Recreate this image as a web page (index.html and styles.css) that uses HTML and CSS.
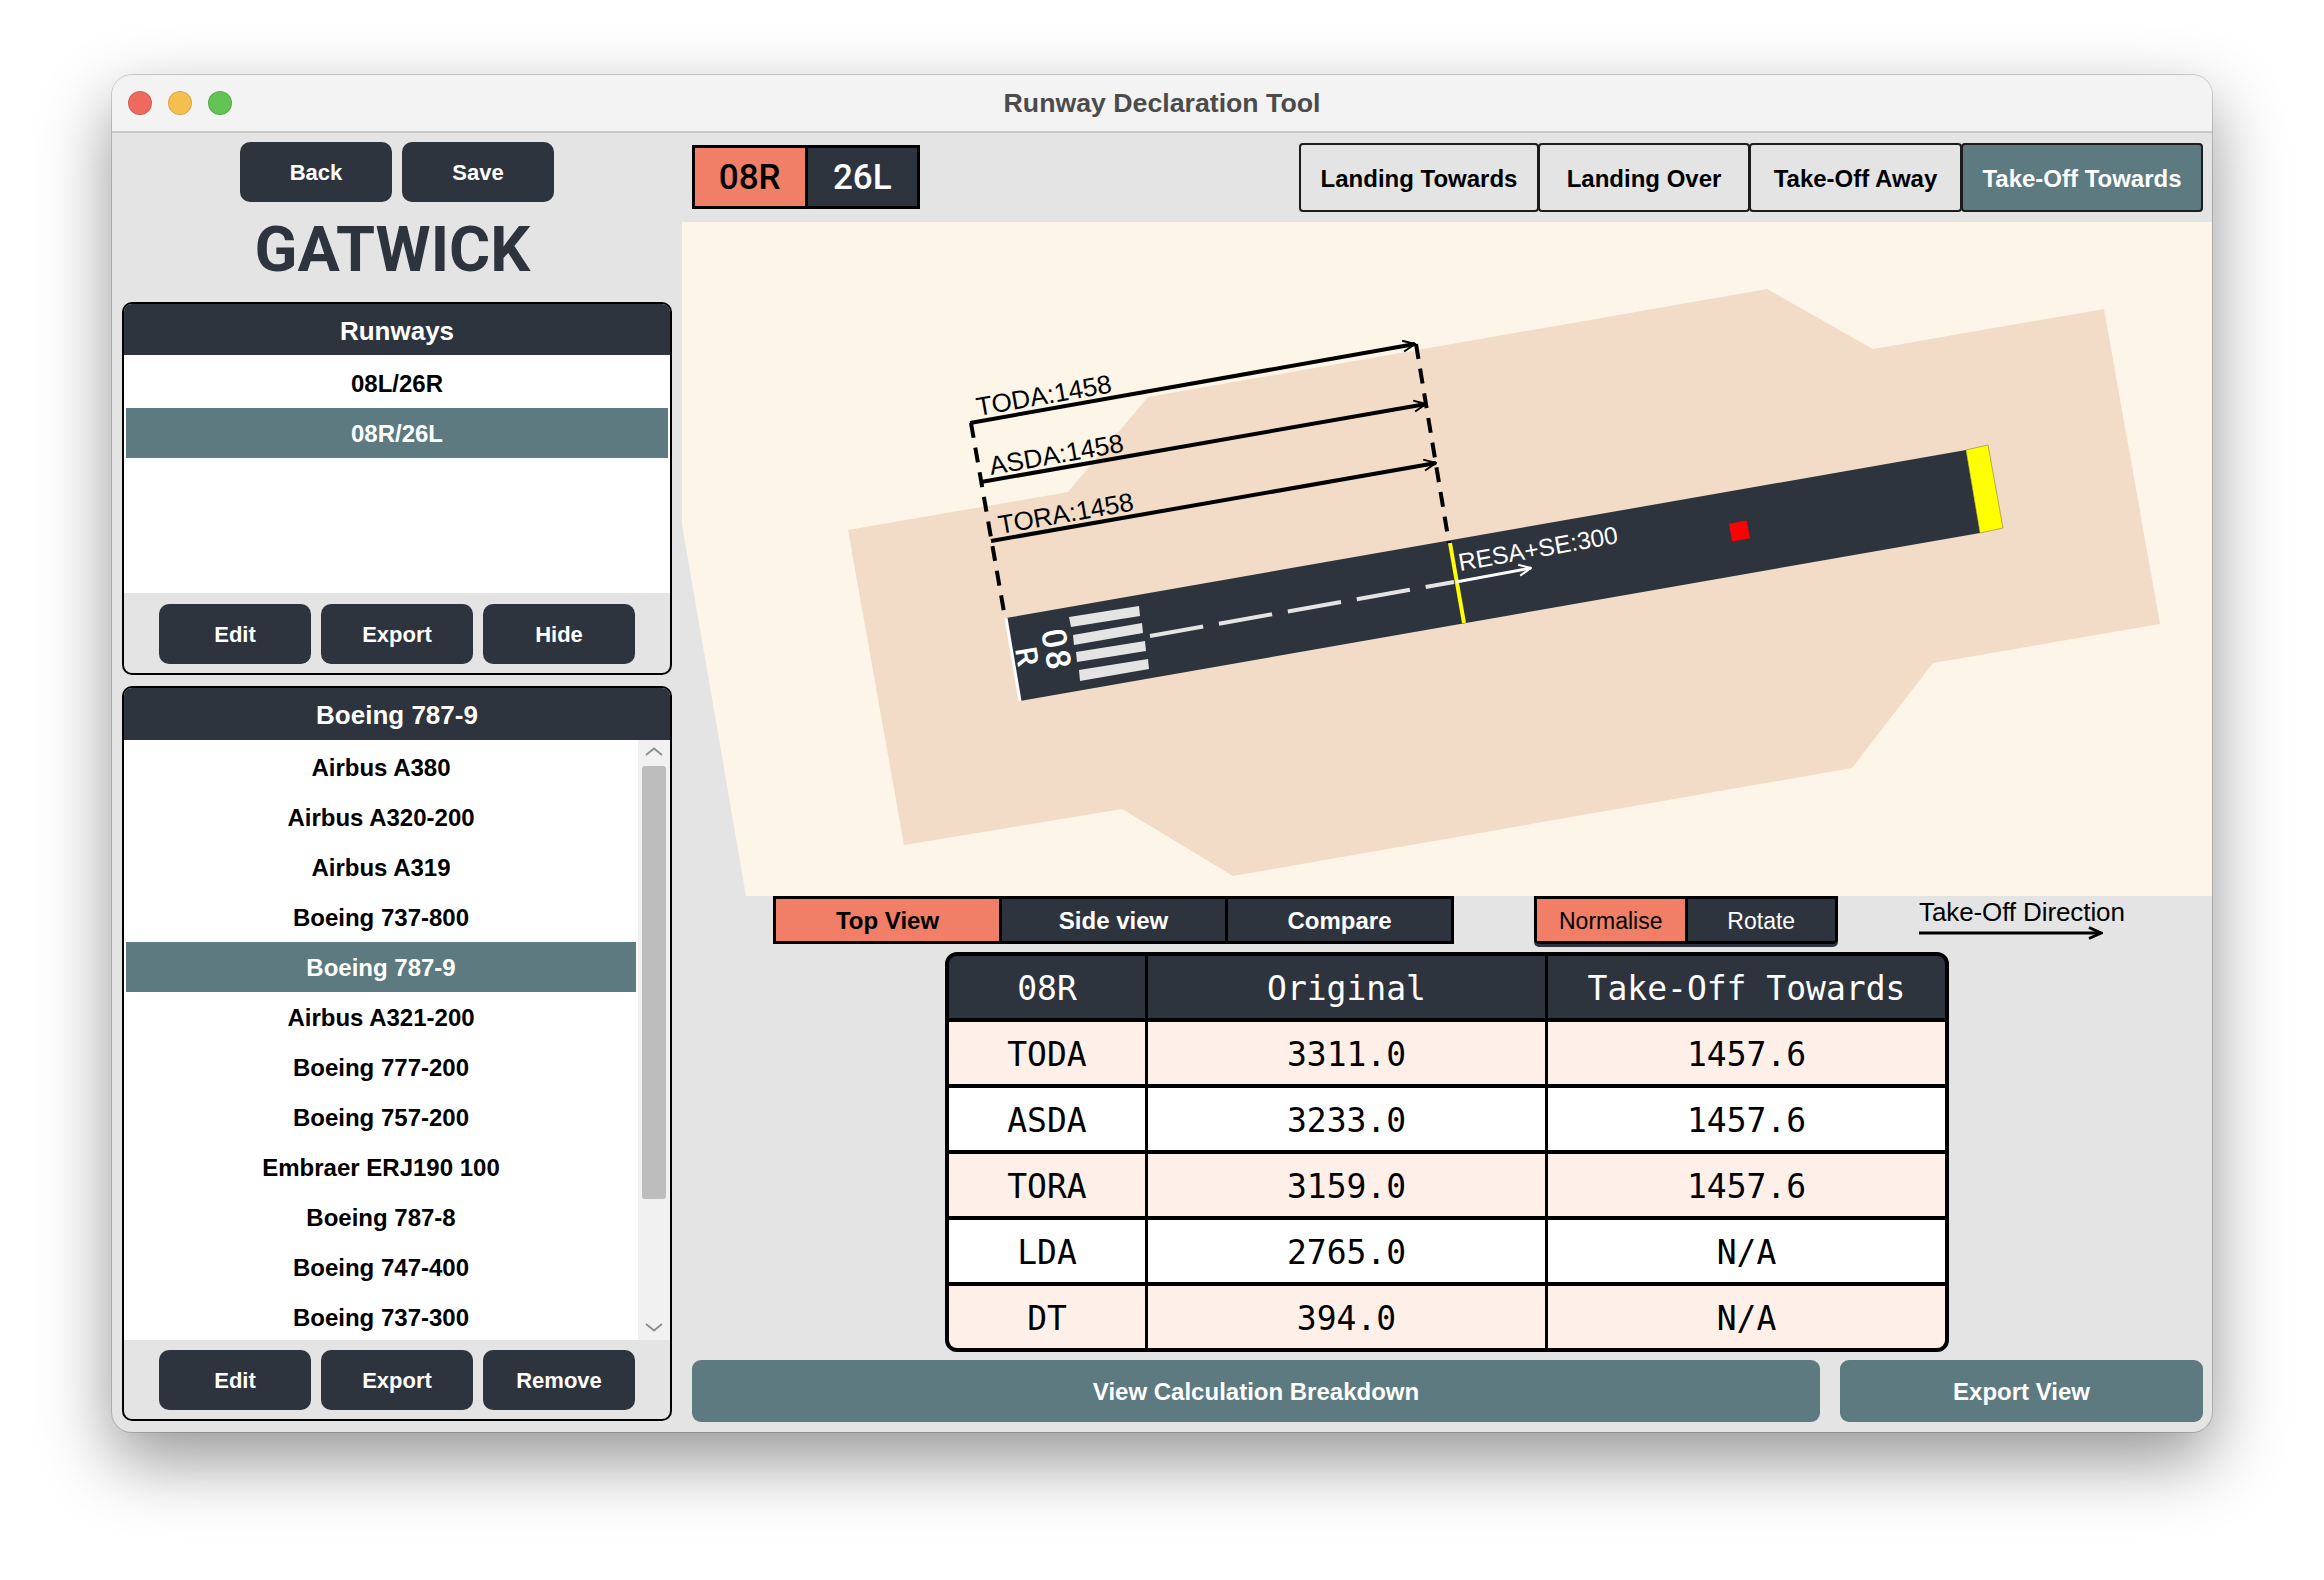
FILE: index.html
```html
<!DOCTYPE html>
<html lang="en">
<head>
<meta charset="utf-8">
<title>Runway Declaration Tool</title>
<link rel="stylesheet" href="styles.css">
</head>
<body>
<div class="window">
  <header class="titlebar">
    <div class="lights"><span class="light red"></span><span class="light yellow"></span><span class="light green"></span></div>
    <div class="title">Runway Declaration Tool</div>
  </header>
  <div class="content">
    <aside class="sidebar">
      <div class="top-buttons"><button class="btn">Back</button><button class="btn">Save</button></div>
      <h1 class="airport">GATWICK</h1>
      <section class="panel runways">
        <div class="panel-head">Runways</div>
        <div class="list">
          <div class="row">08L/26R</div>
          <div class="row selected">08R/26L</div>
        </div>
        <div class="panel-foot"><button class="btn">Edit</button><button class="btn">Export</button><button class="btn">Hide</button></div>
      </section>
      <section class="panel aircraft">
        <div class="panel-head">Boeing 787-9</div>
        <div class="scroll-list">
          <div class="list">
            <div class="row">Airbus A380</div>
            <div class="row">Airbus A320-200</div>
            <div class="row">Airbus A319</div>
            <div class="row">Boeing 737-800</div>
            <div class="row selected">Boeing 787-9</div>
            <div class="row">Airbus A321-200</div>
            <div class="row">Boeing 777-200</div>
            <div class="row">Boeing 757-200</div>
            <div class="row">Embraer ERJ190 100</div>
            <div class="row">Boeing 787-8</div>
            <div class="row">Boeing 747-400</div>
            <div class="row">Boeing 737-300</div>
          </div>
          <div class="scrollbar">
            <svg class="chev" viewBox="0 0 18 9"><path d="M1 8 9 1.5 17 8"/></svg>
            <div class="thumb"></div>
            <svg class="chev chev-down" viewBox="0 0 18 9"><path d="M1 1 9 7.5 17 1"/></svg>
          </div>
        </div>
        <div class="panel-foot"><button class="btn">Edit</button><button class="btn">Export</button><button class="btn">Remove</button></div>
      </section>
    </aside>
    <main class="main">
      <div class="top-row">
        <div class="side-toggle"><span class="side on">08R</span><span class="side off">26L</span></div>
        <div class="tabs">
          <button class="tab">Landing Towards</button>
          <button class="tab">Landing Over</button>
          <button class="tab">Take-Off Away</button>
          <button class="tab active">Take-Off Towards</button>
        </div>
      </div>
      <svg class="canvas" viewBox="682 222 1530 674" width="1530" height="674">
        <defs>
          <marker id="ah" viewBox="0 0 14 14" refX="13" refY="7" markerWidth="14" markerHeight="14" markerUnits="userSpaceOnUse" orient="auto"><path d="M1 1.5 13 7 1 12.5" fill="none" stroke="#000" stroke-width="2"/></marker>
          <marker id="aw" viewBox="0 0 14 14" refX="13" refY="7" markerWidth="14" markerHeight="14" markerUnits="userSpaceOnUse" orient="auto"><path d="M1 1.5 13 7 1 12.5" fill="none" stroke="#fff" stroke-width="2"/></marker>
        </defs>
        <polygon class="cream" points="682,222 2212,222 2212,896 746,896 682,524"/>
        <polygon class="sand" points="848,530 1068,492 1148,397 1767,289 1873,349 2104,309 2160,624 1933,663 1852,768 1233,876 1122,809 904,845"/>
        <polygon class="tarmac" points="1006,618 1966,450 1980,533 1020,701"/>
        <polygon class="stopway" points="1966,450 1988,445 2003,528 1980,533"/>
        <line class="threshold" x1="1006" y1="618" x2="1020" y2="701"/>
        <g class="keys">
          <polygon points="1069,617 1139,606 1140,616 1071,627"/>
          <polygon points="1073,635 1142,623 1143,633 1074,645"/>
          <polygon points="1076,652 1145,641 1146,651 1077,662"/>
          <polygon points="1079,670 1148,659 1149,669 1080,681"/>
        </g>
        <line class="centre" x1="1150" y1="636" x2="1454" y2="582"/>
        <text class="rw-num" transform="translate(1041 631) rotate(80)">08</text>
        <text class="rw-letter" transform="translate(1015 649) rotate(80)">R</text>
        <line class="disp" x1="1450" y1="543" x2="1464" y2="623"/>
        <rect class="marker-red" x="1730.5" y="522" width="18" height="18" transform="rotate(-10 1739.5 531)"/>
        <line class="dash" x1="971" y1="423" x2="1004" y2="612"/>
        <line class="dash" x1="1416" y1="344" x2="1449" y2="543"/>
        <line class="dim" x1="970" y1="423" x2="1415" y2="344" marker-end="url(#ah)"/>
        <line class="dim" x1="981" y1="482" x2="1426" y2="404" marker-end="url(#ah)"/>
        <line class="dim" x1="991" y1="541" x2="1436" y2="463" marker-end="url(#ah)"/>
        <line class="dim-w" x1="1456" y1="582" x2="1531" y2="568" marker-end="url(#aw)"/>
        <text class="lbl" transform="translate(978 416) rotate(-10)">TODA:1458</text>
        <text class="lbl" transform="translate(991 475) rotate(-10)">ASDA:1458</text>
        <text class="lbl" transform="translate(1000 534) rotate(-10)">TORA:1458</text>
        <text class="lbl-w" transform="translate(1460 571) rotate(-10)">RESA+SE:300</text>
      </svg>
      <div class="controls">
        <div class="seg view-seg"><span class="seg-item on">Top View</span><span class="seg-item off">Side view</span><span class="seg-item off">Compare</span></div>
        <div class="seg mode-seg"><span class="seg-item on">Normalise</span><span class="seg-item off">Rotate</span></div>
        <div class="direction">
          <div class="direction-label">Take-Off Direction</div>
          <svg class="direction-arrow" viewBox="0 0 184 14" width="184" height="14">
            <line x1="0" y1="7" x2="182" y2="7"/><path d="M170 1.5 182 7 170 12.5"/>
          </svg>
        </div>
      </div>
      <div class="table">
        <div class="cell head">08R</div><div class="cell head">Original</div><div class="cell head">Take-Off Towards</div>
        <div class="cell tint">TODA</div><div class="cell tint">3311.0</div><div class="cell tint">1457.6</div>
        <div class="cell">ASDA</div><div class="cell">3233.0</div><div class="cell">1457.6</div>
        <div class="cell tint">TORA</div><div class="cell tint">3159.0</div><div class="cell tint">1457.6</div>
        <div class="cell">LDA</div><div class="cell">2765.0</div><div class="cell">N/A</div>
        <div class="cell tint">DT</div><div class="cell tint">394.0</div><div class="cell tint">N/A</div>
      </div>
      <div class="actions">
        <button class="action wide">View Calculation Breakdown</button>
        <button class="action narrow">Export View</button>
      </div>
    </main>
  </div>
</div>
</body>
</html>
```
FILE: styles.css
```css
* { box-sizing: border-box; }
html, body { margin: 0; background: #fff; }
body { width: 2324px; height: 1580px; padding: 75px 112px 0; overflow: hidden; font-family: "Liberation Sans", Arial, sans-serif; }
button { font-family: inherit; border: 0; margin: 0; padding: 0; }

.window { width: 2100px; height: 1357px; background: #e4e4e4; border-radius: 20px; overflow: hidden; box-shadow: 0 28px 70px rgba(0,0,0,.42), 0 0 0 1px rgba(0,0,0,.16); }

.titlebar { height: 58px; background: #f3f3f3; border-bottom: 2px solid #c9c9c9; display: flex; align-items: center; position: relative; }
.lights { display: flex; gap: 16px; padding-left: 16px; }
.light { width: 24px; height: 24px; border-radius: 50%; border: 1px solid rgba(0,0,0,.12); }
.red { background: #ee6a5f; }
.yellow { background: #f5bf4f; }
.green { background: #61c454; }
.title { position: absolute; left: 0; right: 0; top: 13px; text-align: center; font-size: 26.7px; font-weight: 700; color: #4b4b4b; line-height: 30px; }

.content { display: flex; height: 1299px; }
.sidebar { width: 570px; flex: none; padding: 9px 10px 0 10px; }
.top-buttons { display: flex; justify-content: center; gap: 10px; }
.btn { width: 152px; height: 60px; padding-top: 2px; background: #2e343d; color: #fff; border-radius: 10px; font-size: 22px; font-weight: 700; }
.airport { margin: 20px 0 24px; padding-right: 9px; height: 56px; line-height: 56px; text-align: center; font-family: Roboto, sans-serif; font-size: 63px; font-weight: 700; color: #2e343d; }

.panel { width: 550px; border: 2px solid #000; border-radius: 10px; overflow: hidden; background: #e4e4e4; }
.panel-head { background: #2e343d; color: #fff; text-align: center; font-weight: 700; font-size: 26px; height: 51px; line-height: 54px; }
.aircraft .panel-head { height: 52px; line-height: 54px; }
.list { background: #fff; padding: 2px 2px 0; overflow: hidden; }
.row { height: 50px; line-height: 52px; text-align: center; font-size: 24px; font-weight: 700; color: #000; }
.row.selected { background: #5c7a80; color: #fff; }
.runways { height: 373px; }
.runways .list { height: 238px; padding-top: 3px; }
.panel-foot { display: flex; justify-content: center; gap: 10px; padding-top: 11px; }
.aircraft { height: 735px; margin-top: 11px; }
.aircraft .panel-foot { padding-top: 10px; }
.scroll-list { display: flex; height: 600px; }
.scroll-list .list { flex: 1; height: 600px; }
.scrollbar { width: 32px; flex: none; background: #f1f1f1; display: flex; flex-direction: column; align-items: center; padding: 7px 0; }
.chev { width: 18px; height: 9px; flex: none; }
.chev path { fill: none; stroke: #8d8d8d; stroke-width: 1.8; }
.chev-down { margin-top: auto; margin-bottom: 1px; }
.thumb { width: 24px; height: 433px; margin-top: 10px; background: #bdbdbd; border-radius: 3px; }

.main { flex: 1; min-width: 0; }
.top-row { display: flex; justify-content: space-between; align-items: flex-start; padding: 10px 9px 0 10px; height: 89px; }
.side-toggle { display: flex; width: 228px; height: 64px; margin-top: 2px; border: 3px solid #000; background: #000; gap: 3px; }
.side { flex: 1; display: flex; align-items: center; justify-content: center; font-family: Roboto, sans-serif; font-weight: 500; font-size: 35px; }
.side.on { background: #f17e66; color: #000; }
.side.off { background: #2e343d; color: #fff; }
.tabs { display: flex; }
.tab { height: 69px; padding-top: 3px; background: #e4e4e4; border: 2px solid #1c1c1c; border-radius: 4px; font-size: 24px; font-weight: 700; color: #000; margin-left: -1px; flex: none; }
.tab:nth-child(1) { width: 240px; }
.tab:nth-child(2) { width: 212px; }
.tab:nth-child(3) { width: 213px; }
.tab:nth-child(4) { width: 242px; }
.tab.active { background: #5c7a80; color: #fff; }

.canvas { display: block; width: 1530px; height: 674px; }
.cream { fill: #fdf6e8; }
.sand { fill: #f2dcc8; }
.tarmac { fill: #2e343d; }
.stopway { fill: #ffff00; stroke: #6b6b3a; stroke-width: .5; }
.threshold { stroke: #fff; stroke-width: 3; }
.keys polygon { fill: #e4e4e4; }
.centre { stroke: #e4e4e4; stroke-width: 4; stroke-dasharray: 54 16; }
.disp { stroke: #ffff00; stroke-width: 4; }
.marker-red { fill: #ff0000; }
.dash { stroke: #000; stroke-width: 4; stroke-dasharray: 15 10; }
.dim { stroke: #000; stroke-width: 4; fill: none; }
.dim-w { stroke: #fff; stroke-width: 3; }
.lbl { font-family: "Liberation Sans", sans-serif; font-size: 26px; fill: #000; }
.lbl-w { font-family: "Liberation Sans", sans-serif; font-size: 24.5px; fill: #fff; }
.rw-num { font-family: Roboto, sans-serif; font-weight: 500; font-size: 34px; letter-spacing: 2px; fill: #fff; }
.rw-letter { font-family: Roboto, sans-serif; font-weight: 500; font-size: 30px; fill: #fff; }

.controls { display: flex; align-items: flex-start; height: 56px; padding-left: 91px; }
.seg { display: flex; height: 48px; border: 3px solid #000; background: #000; gap: 3px; }
.seg-item { flex: 1; display: flex; align-items: center; justify-content: center; padding-top: 1px; }
.seg-item.on { background: #f17e66; color: #000; }
.seg-item.off { background: #2e343d; color: #fff; }
.view-seg { width: 681px; font-size: 24px; font-weight: 700; }
.mode-seg { width: 304px; margin-left: 80px; font-size: 23px; border-radius: 0 0 5px 5px; box-shadow: 0 3px 0 #2e343d; }
.mode-seg .seg-item { padding-top: 3px; }
.direction { margin-left: 81px; width: 220px; }
.direction-label { font-size: 26px; color: #000; line-height: 32px; letter-spacing: -.1px; white-space: nowrap; }
.direction-arrow { display: block; margin-top: -2px; }
.direction-arrow line, .direction-arrow path { stroke: #000; stroke-width: 3; fill: none; }

.table { display: grid; grid-template-columns: 196px 397px 397px; column-gap: 3px; row-gap: 4px; width: 1004px; margin-left: 263px; background: #000; border: 4px solid #000; border-radius: 12px; overflow: hidden; }
.cell { height: 62px; padding-top: 2px; display: flex; align-items: center; justify-content: center; background: #fff; color: #000; font-family: "DejaVu Sans Mono", monospace; font-size: 33px; }
.cell.head { background: #2e343d; color: #fff; }
.cell.tint { background: #fef0e8; }

.actions { display: flex; gap: 20px; padding: 8px 9px 0 10px; }
.action { height: 62px; padding-top: 2px; background: #5c7a80; color: #fff; border-radius: 9px; font-size: 24px; font-weight: 700; flex: none; }
.wide { width: 1128px; }
.narrow { width: 363px; }
```
